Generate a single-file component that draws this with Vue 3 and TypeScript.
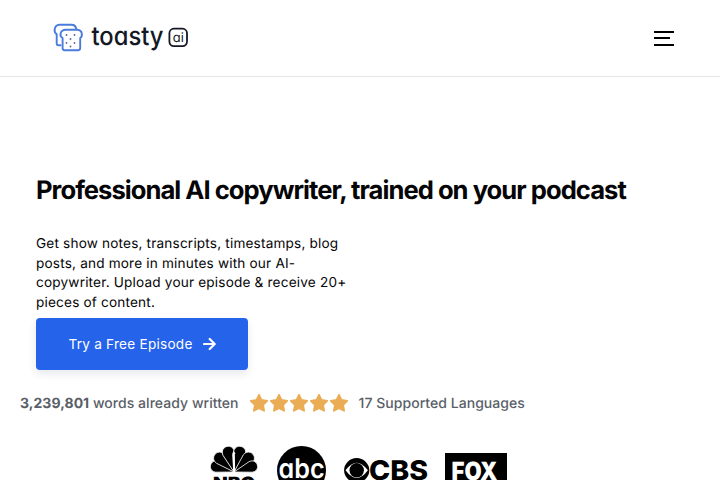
<script setup lang="ts">
import { ref } from 'vue';

const wordCount = ref(3239801);
const languages = ref(17);
const stars = 5;

// rotation and length of each feather around the foot of the peacock
const feathers = [
  { angle: -73, scale: 0.92 },
  { angle: -46, scale: 0.98 },
  { angle: -16, scale: 1 },
  { angle: 16, scale: 1 },
  { angle: 46, scale: 0.98 },
  { angle: 73, scale: 0.92 }
];

const crumbs = [[66.5, 35], [74.5, 35], [70.5, 39], [66.5, 43], [74.5, 43], [70.5, 46.5]];
</script>
<template>
  <div class='page'>
    <header class='header'>
      <svg class='brand' width='140' height='36' viewBox='52 20 140 36'>
        <g fill='none' stroke='#4a7cdb' stroke-width='1.9' stroke-linejoin='round' stroke-linecap='round'>
          <path d='M60.5 45.2H58Q56.7 45.2 56.7 43.7V34.2C53.5 32.5 53.8 25 59.3 24.7H71.5Q75.7 24.8 76.3 29' />
          <path d='M65.6 29.8H77.2C82.8 30.2 82.8 36.2 80.2 38V48Q80.2 50.2 78 50.2H64.6Q62.6 50.2 62.6 48V38C59 36.2 60 30 65.6 29.8Z' />
        </g>
        <circle v-for='(c, i) in crumbs' :key='i' :cx='c[0]' :cy='c[1]' r='.9' fill='#526a9c' />
        <text class='wordmark' x='91.5' y='44.9' textLength='72' lengthAdjust='spacingAndGlyphs'>toasty</text>
        <rect x='169.4' y='28.7' width='17.6' height='17.4' rx='4.5' fill='none' stroke='#151824' stroke-width='1.8' />
        <text class='wordmark-ai' x='172.8' y='42' textLength='11' lengthAdjust='spacingAndGlyphs'>ai</text>
      </svg>
      <button class='menu' aria-label='Menu'>
        <span></span>
        <span class='short'></span>
        <span></span>
      </button>
    </header>

    <main class='hero'>
      <h1>Professional AI copywriter, trained on your podcast</h1>
      <p>Get show notes, transcripts, timestamps, blog posts, and more in minutes with our AI-copywriter. Upload your episode &amp; receive 20+ pieces of content.</p>
      <button class='cta'>
        <span>Try a Free Episode</span>
        <svg width='13' height='14' viewBox='0 0 13 14'>
          <path d='M1 7H11M6.7 2L11.7 7L6.7 12' fill='none' stroke='#fff' stroke-width='2.2' stroke-linecap='round' stroke-linejoin='round' />
        </svg>
      </button>
    </main>

    <section class='stats'>
      <span><b>{{ wordCount.toLocaleString('en-US') }}</b> words already written</span>
      <div class='stars'>
        <svg v-for='n in stars' :key='n' width='20' height='20' viewBox='0 0 20 20'>
          <path d='M10 1.8L12.5 7L18.2 7.8L14.1 11.9L15.1 17.8L10 15.3L4.9 17.8L5.9 11.9L1.8 7.8L7.5 7Z' fill='#eaac55' stroke='#eaac55' stroke-width='1.8' stroke-linejoin='round' />
        </svg>
      </div>
      <span>{{ languages }} Supported Languages</span>
    </section>

    <section class='press'>
      <svg width='48' height='52' viewBox='0 0 48 52'>
        <path v-for='f in feathers' :key='f.angle' :transform='`translate(24 26) rotate(${f.angle}) scale(${f.scale})`' d='M0 0L-6 -19C-7.5 -29 7.5 -29 6 -19Z' stroke='#fff' stroke-width='.8' />
        <path d='M23.3 27L22.2 8.5L22.8 6.2L24 5.2L25.6 7.8H24.8L25.2 27Z' fill='#fff' />
        <rect y='27' width='48' height='4' fill='#fff' />
        <text class='nbc' x='3' y='42.8' textLength='42' lengthAdjust='spacingAndGlyphs'>NBC</text>
      </svg>
      <svg width='49' height='50' viewBox='0 0 49 50'>
        <circle cx='24.5' cy='24.5' r='24.5' />
        <text class='abc' x='1.6' y='32' textLength='46' lengthAdjust='spacingAndGlyphs'>abc</text>
      </svg>
      <svg width='84' height='38' viewBox='0 0 84 38'>
        <ellipse cx='12.7' cy='24.3' rx='12.6' ry='12.2' />
        <path d='M1.5 24.3Q12.7 9.1 23.9 24.3Q12.7 39.5 1.5 24.3Z' fill='#fff' />
        <circle cx='12.7' cy='24.3' r='7.2' />
        <text class='cbs' x='25' y='34.3' textLength='59' lengthAdjust='spacingAndGlyphs'>CBS</text>
      </svg>
      <svg class='fox-logo' width='62' height='42' viewBox='0 0 62 42'>
        <rect width='62' height='42' />
        <text class='fox' x='6.5' y='27.2' textLength='46' lengthAdjust='spacingAndGlyphs'>FOX</text>
      </svg>
    </section>
  </div>
</template>
<style>
body {
  overflow: hidden;
}
</style>
<style scoped>
.page {
  height: 480px;
  overflow: hidden;
  background: #fff;
  color: #050507;
  font-family: Inter, sans-serif;
  text-rendering: geometricPrecision;
}

.header {
  box-sizing: border-box;
  height: 77px;
  padding: 0 46px 0 52px;
  border-bottom: 1px solid #e5e5e5;
  display: flex;
  align-items: center;
  justify-content: space-between;
}

.wordmark {
  font: 500 26px Inter, sans-serif;
  font-feature-settings: 'cv11';
  fill: #151824;
}

.wordmark-ai {
  font: 400 13px Inter, sans-serif;
  font-feature-settings: 'cv11';
  fill: #151824;
}

.menu {
  width: 20px;
  padding: 0;
  border: 0;
  background: none;
  display: flex;
  flex-direction: column;
  gap: 4.5px;
}

.menu span {
  width: 20px;
  height: 2px;
  background: #000;
}

.menu .short {
  width: 16px;
}

.hero {
  padding: 97px 36px 0;
}

h1 {
  margin: 0 0 28px;
  font-size: 25.6px;
  line-height: 33px;
  font-weight: 700;
  letter-spacing: -0.98px;
  white-space: nowrap;
}

p {
  width: 324px;
  margin: 0 0 4.6px;
  font-size: 13.6px;
  line-height: 19.6px;
  letter-spacing: 0.18px;
}

.cta {
  width: 212px;
  height: 52px;
  padding: 0;
  border: 0;
  border-radius: 4px;
  background: #2563eb;
  color: #fff;
  box-shadow: 0 4px 8px rgba(20, 40, 90, 0.1);
  display: flex;
  align-items: center;
  justify-content: center;
  gap: 10px;
  font: 400 13.6px Inter, sans-serif;
  letter-spacing: 0.24px;
}

.stats {
  display: flex;
  align-items: center;
  height: 20px;
  margin-top: 23px;
  padding-left: 20px;
  color: #595e67;
  font-size: 14px;
  font-weight: 500;
  letter-spacing: 0.04px;
  white-space: nowrap;
}

.stats > span {
  padding-top: 2px;
}

.stars {
  display: flex;
  margin: 0 10px;
}

.press {
  display: flex;
  align-items: flex-start;
  gap: 18.5px;
  padding: 33px 0 0 210px;
}

.press svg {
  flex-shrink: 0;
}

.press .fox-logo {
  margin: 7px 0 0 -1.5px;
}

.nbc {
  font: 900 17px Inter, sans-serif;
}

.abc {
  font: 600 27px Inter, sans-serif;
  font-feature-settings: 'cv11';
  fill: #fff;
}

.cbs {
  font: 800 27px Inter, sans-serif;
}

.fox {
  font: 900 25px Inter, sans-serif;
  fill: #fff;
}
</style>
